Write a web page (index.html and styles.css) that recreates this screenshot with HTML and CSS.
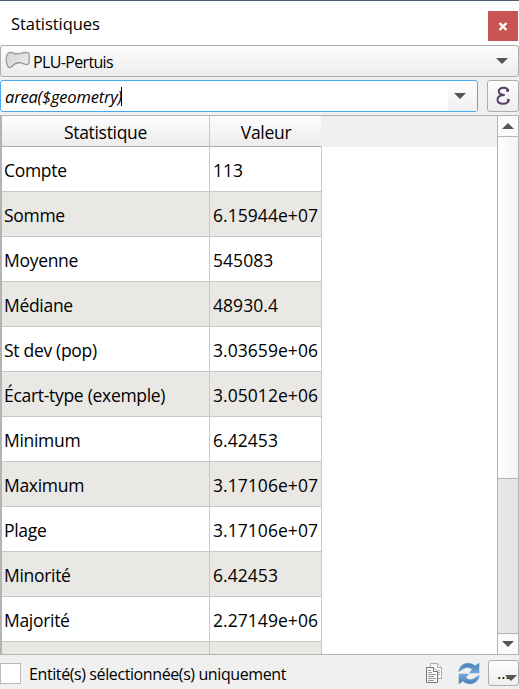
FILE: index.html
```
<!DOCTYPE html>
<html lang="fr">
<head>
<meta charset="utf-8">
<title>Statistiques</title>
<link rel="stylesheet" href="styles.css">
</head>
<body>
<main class="panel">
  <header class="titlebar">
    <h1 class="title">Statistiques</h1>
    <button class="close" aria-label="Fermer"><svg width="10" height="9" viewBox="0 0 10 9"><path d="M1.500 1l7 7M8.500 1l-7 7" stroke="#fff" stroke-width="2.300"/></svg></button>
  </header>
  <div class="combo">
    <svg class="layer" width="26" height="20" viewBox="0 0 26 20"><defs><linearGradient id="g" x2="1" y2="1"><stop stop-color="#d2d2d2"/><stop offset="1" stop-color="#f0f0f0"/></linearGradient></defs><path d="M2.300 3.200C4 .8 7 1.300 9.500 2.300C13 3.700 16 2 20 1.500C24 1 24.500 3 24.200 6C23.900 9 25 11 23.500 13C21 15 19 12.200 15.500 11.800C11.500 11.500 9.500 12.500 7.500 15C5.500 17.500 3 17 2 13.500C1 10 1 5.500 2.300 3.200Z" fill="url(#g)" stroke="#999" stroke-width="1.300"/></svg>
    <span class="layer-name">PLU-Pertuis</span>
    <span class="arrow"></span>
  </div>
  <div class="expression">
    <div class="field"><span class="formula">area($geometry)</span><span class="caret"></span><span class="drop"><span class="arrow"></span></span></div>
    <button class="epsilon" aria-label="Expression"><svg width="17" height="20" viewBox="0 0 17 20"><path d="M13.300 5C12.800 2.500 11 1.700 8.800 1.700C5.800 1.700 3.800 3.100 3.800 5.300C3.800 7.800 6 9 9.800 9C5 9 2.500 10.600 2.500 13.500C2.500 16.300 4.800 17.800 8 17.800C11.200 17.800 13.500 16.600 13.800 13.600" fill="none" stroke="#5b3d6c" stroke-width="2"/><circle cx="12.600" cy="4.600" r="1.500" fill="#5b3d6c"/><circle cx="13.200" cy="14" r="1.300" fill="#5b3d6c"/></svg></button>
  </div>
  <section class="view">
    <div class="content">
      <div class="head"><span class="name">Statistique</span><span class="value">Valeur</span></div>
      <div class="row"><span class="name">Compte</span><span class="value">113</span></div>
      <div class="row"><span class="name">Somme</span><span class="value">6.15944e+07</span></div>
      <div class="row"><span class="name">Moyenne</span><span class="value">545083</span></div>
      <div class="row"><span class="name">Médiane</span><span class="value">48930.4</span></div>
      <div class="row"><span class="name">St dev (pop)</span><span class="value">3.03659e+06</span></div>
      <div class="row"><span class="name">Écart-type (exemple)</span><span class="value">3.05012e+06</span></div>
      <div class="row"><span class="name">Minimum</span><span class="value">6.42453</span></div>
      <div class="row"><span class="name">Maximum</span><span class="value">3.17106e+07</span></div>
      <div class="row"><span class="name">Plage</span><span class="value">3.17106e+07</span></div>
      <div class="row"><span class="name">Minorité</span><span class="value">6.42453</span></div>
      <div class="row"><span class="name">Majorité</span><span class="value">2.27149e+06</span></div>
      <div class="row"><span class="name"></span><span class="value"></span></div>
    </div>
    <div class="scroll">
      <span class="step"><span class="arrow up"></span></span>
      <span class="thumb"></span>
      <span class="track"></span>
      <span class="step down"><span class="arrow"></span></span>
    </div>
  </section>
  <footer class="footer">
    <span class="check"></span>
    <span class="check-label">Entité(s) sélectionnée(s) uniquement</span>
    <svg class="copy" width="18" height="21" viewBox="0 0 18 21"><g fill="#fafafa"><path d="M5.500 .5h7l4 4V15.500h-11z" stroke="#aaa"/><path d="M12.500 .5v4h4" stroke="#aaa"/><path d="M13 7.500h2M13 9.500h2M13 11.500h2" stroke="#aaa"/><path d="M1.500 4.500h7l4 4V19.500h-11z" stroke="#777"/><path d="M8.500 4.500v4h4" stroke="#777"/><path d="M3 7.500h3M3 9.500h4M3 11.500h8M3 13.500h6M3 15.500h8M3 17.500h6" stroke="#999"/></g></svg>
    <svg class="refresh" width="22" height="23" viewBox="0 0 22 23"><defs><linearGradient id="b" x2="0" y2="1"><stop stop-color="#437fb8"/><stop offset="1" stop-color="#77a8d7"/></linearGradient></defs><path d="M.8 9.500C1.500 3.500 6.500.5 11.500 1.300C14 1.700 15.500 2.600 17 4L21 1V11H11.500L14.300 7.500C12 5.200 9 4.800 6.300 6.200C4.200 7.300 3 8.500 .8 9.500Z" fill="url(#b)" stroke="#6595c2" stroke-width=".5"/><path d="M.8 9.500C1.500 3.500 6.500.5 11.500 1.300C14 1.700 15.500 2.600 17 4L21 1V11H11.500L14.300 7.500C12 5.200 9 4.800 6.300 6.200C4.200 7.300 3 8.500 .8 9.500Z" transform="rotate(180 11 11.500)" fill="url(#b)" stroke="#6595c2" stroke-width=".5"/></svg>
    <button class="more" aria-label="Options"><span class="dots">...</span><span class="arrow"></span></button>
  </footer>
</main>
</body>
</html>
```
FILE: styles.css
```
* { box-sizing: border-box; }
body { margin: 0; font-family: "Open Sans", "Noto Sans", sans-serif; color: #000; background: #f0f0f0; }
button { padding: 0; font: inherit; }
svg { display: block; }
.panel { width: 519px; height: 689px; overflow: hidden; display: flex; flex-direction: column; }
.titlebar { height: 45px; flex: none; display: flex; align-items: flex-start; justify-content: space-between; background: #fff; border-top: 1px solid #495c70; padding: 10px 1px 0 11px; }
.title { margin: 0; font-size: 16.500px; font-weight: 400; line-height: 26px; letter-spacing: -.05px; }
.close { width: 30px; height: 30px; border: 0; background: #c95454; display: grid; place-items: center; }
.arrow { flex: none; width: 12px; height: 6px; background: #555; clip-path: polygon(0 0, 100% 0, 50% 100%); }
.arrow.up { clip-path: polygon(50% 0, 100% 100%, 0 100%); }
.combo { height: 32px; flex: none; display: flex; align-items: center; border: 1px solid #adadad; border-radius: 3px; background: linear-gradient(#fdfdfd, #ececec); padding: 0 10px 0 4px; }
.layer { margin-top: -1px; }
.layer-name { flex: 1; margin-left: 2px; font-size: 16px; letter-spacing: -.65px; padding-top: 1px; }
.expression { height: 32px; flex: none; margin-top: 3px; display: flex; gap: 9px; }
.field { width: 478px; display: flex; align-items: center; background: #fff; border: 1px solid #45a9f5; border-radius: 3px; padding-left: 4px; }
.formula { font-size: 16.500px; font-style: italic; letter-spacing: -.2px; padding-top: 1px; }
.caret { width: 1px; height: 19px; background: #000; margin-left: -1px; }
.drop { margin-left: auto; width: 29px; height: 29px; background: linear-gradient(#fdfdfd, #f0f0f0); display: flex; align-items: center; padding-left: 6px; }
.epsilon { width: 32px; border: 1px solid #adadad; border-radius: 3px; background: linear-gradient(#fdfdfd, #ededed); display: grid; place-items: center; }
.view { height: 540px; flex: none; margin-top: 3px; display: flex; border: 1px solid #b4b4b4; border-left-width: 2px; background: #fff; border-right: 0; }
.content { flex: 1; overflow: hidden; font-size: 17.500px; letter-spacing: -.3px; }
.head, .row { display: flex; }
.head { height: 31px; background: #f0f0f0; line-height: 33px; text-align: center; }
.row { height: 45px; line-height: 47px; }
.name { width: 208px; border-right: 1px solid #c8c8c8; }
.value { width: 112px; border-right: 1px solid #c8c8c8; }
.row .name, .row .value { border-bottom: 1px solid #c8c8c8; padding-left: 2px; }
.row .value { padding-left: 3px; letter-spacing: .05px; }
.row:nth-child(odd) .name, .row:nth-child(odd) .value { background: #e9e8e4; }
.head .name, .head .value { background: linear-gradient(#fdfdfd, #ececec); border-bottom: 1px solid #adadad; }
.head .value { border-right-color: #f0f0f0; padding-left: 1px; }
.scroll { width: 22px; display: flex; flex-direction: column; border: solid #b4b4b4; border-width: 0 1px; }
.step { height: 21px; flex: none; border-bottom: 1px solid #b4b4b4; background: #fbfbfb; display: grid; place-items: center; }
.step.down { border-bottom: 0; border-top: 1px solid #b4b4b4; }
.thumb { height: 342px; flex: none; background: linear-gradient(90deg, #fff, #f3f3f3); border-bottom: 1px solid #b4b4b4; }
.track { flex: 1; background: #e6e6e6; }
.footer { flex: 1; display: flex; align-items: flex-start; }
.check { width: 21px; height: 21px; margin-top: 8px; background: #fff; border: 1px solid #b9b9b9; }
.check-label { width: 396px; margin-left: 8px; font-size: 16px; line-height: 22px; letter-spacing: -.4px; padding-top: 8px; white-space: nowrap; }
.copy { margin-top: 8px; }
.refresh { margin: 7px 0 0 15px; }
.more { position: relative; width: 31px; height: 26px; margin: 5px 0 0 8px; border: 1px solid #adadad; border-radius: 3px; background: linear-gradient(#fdfdfd, #eee); }
.dots { position: absolute; left: 8px; top: 1px; font-size: 16px; line-height: 22px; }
.more .arrow { position: absolute; left: 16px; top: 14px; }
```
